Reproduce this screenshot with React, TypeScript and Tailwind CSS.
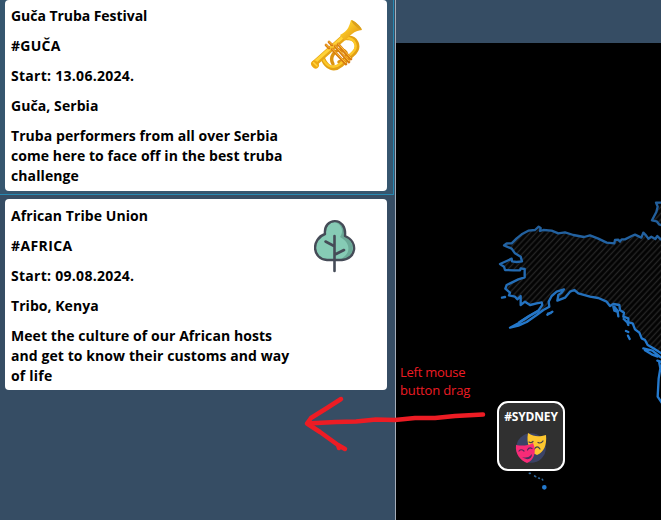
import React from "react";

type Line = { text: string; tracking: string };

function Trumpet() {
  return (
    <svg className="h-[54px] w-[54px]" viewBox="0 0 54 54" fill="none" strokeLinecap="round" strokeLinejoin="round">
      <defs>
        <linearGradient id="gold" x1="0" y1="0" x2="1" y2="1">
          <stop offset="0.2" stopColor="#ffd52e" />
          <stop offset="0.8" stopColor="#e59a12" />
        </linearGradient>
      </defs>
      <path d="M24 46 C20 39 26 31 33 32 C40 34 38 42 30 44" stroke="#dc9310" strokeWidth="3.4" />
      <path d="M14 41 C18 50 25 53 32 47 L44 36 C52 29 47 19 38 20" stroke="#e2a013" strokeWidth="4.6" />
      <path d="M14 41 C18 49 25 51 31 46 L43 35 C50 29 46 20 37 20" stroke="#fdc829" strokeWidth="2.4" />
      <path d="M6 45 L34 20" stroke="#e7a616" strokeWidth="6" />
      <path d="M6 43.8 L34 18.8" stroke="#ffd338" strokeWidth="3" />
      <path d="M31 17 C40 12 40 8 42 2 C46 3 51 8 53 12 C45 13 41 17 36 23 Z" fill="url(#gold)" />
      <ellipse cx="47.5" cy="7" rx="6.8" ry="1.5" transform="rotate(43 47.5 7)" fill="#dba01b" />
      <ellipse cx="6" cy="46.5" rx="3.5" ry="4.3" transform="rotate(-42 6 46.5)" fill="#eea912" />
      <path d="M4.5 44.5 L8 48" stroke="#ffd33d" strokeWidth="1.5" />
      <g stroke="#d77b12" strokeWidth="2.7">
        <path d="M17 27 L20 30 M20 24 L23 27 M23 31 L37 46 M26 28 L40 44 M29 26 L42 41" />
      </g>
      <g stroke="#ffc438" strokeWidth="1">
        <path d="M17 26.5 L20 29.5 M20 23.5 L23 26.5 M23 30.5 L37 45 M26 27.5 L40 43 M29 25.5 L42 40" />
      </g>
    </svg>
  );
}

function Tree() {
  return (
    <svg className="h-[54px] w-[42px]" viewBox="0 0 42 54" fill="none" strokeLinecap="round" strokeLinejoin="round">
      <path d="M13 41 C-2 40 -3 20 11 15 C9 -2 33 -3 31 17 C45 23 42 40 28 41 Z" fill="#86cbb5" />
      <path d="M21 3 C32 3 33 13 30 17 C44 24 39 40 28 41 H24 C37 37 38 24 26 18 C30 12 28 6 21 3Z" fill="#6ba997" />
      <path d="M13 41 C-2 40 -3 20 11 15 C9 -2 33 -3 31 17 C45 23 42 40 28 41 Z" stroke="#454b57" strokeWidth="2.4" />
      <path d="M20.5 17 V52 M11.5 22.5 L20 27 M21 35.5 L30 31" stroke="#454b57" strokeWidth="2.6" />
    </svg>
  );
}

function Masks() {
  return (
    <svg className="h-8 w-8" viewBox="0 0 32 32" fill="none" strokeLinecap="round">
      <circle cx="16" cy="16" r="14.8" fill="#3b4366" />
      <path d="M13 1 C19 5 24 5 31 3 C32 13 29 20 22 23 C15 20 11 12 13 1Z" fill="#fcc62f" />
      <path d="M14 10 Q16 11.5 18 9.5 M23 10.5 Q26 12 28 9 M19 17.5 Q22 12.5 25 17" stroke="#403f50" strokeWidth="1.2" />
      <path d="M1 13 C7 14 12 14 18 11 C22 20 19 28 12 31 C5 28 0 22 1 13Z" fill="#f82b77" />
      <path d="M4 19 Q6 16.5 9 19 M12.5 18 Q14 15 17 16.5" stroke="#512a5d" strokeWidth="1.2" />
      <path d="M7 25 Q13 27 17 22 C17 27 13 29 7 25Z" fill="#4a315e" />
    </svg>
  );
}

function MapDrawing() {
  return (
    <svg className="block h-[477px] w-[265px]" viewBox="396 43 265 477" fill="none">
      <defs>
        <pattern id="hatch" width="13" height="13" patternUnits="userSpaceOnUse" patternTransform="rotate(43)">
          <rect width="13" height="13" fill="#030303" />
          <path d="M6.5 0 V13" stroke="#252525" strokeWidth="4" />
        </pattern>
        <linearGradient id="coast" gradientUnits="userSpaceOnUse" x1="0" y1="110" x2="0" y2="430">
          <stop stopColor="#225f9c" />
          <stop offset="1" stopColor="#247acf" />
        </linearGradient>
      </defs>
      <g transform="translate(490 190) scale(.333333)" stroke="url(#coast)" strokeWidth="7" strokeLinejoin="round" strokeLinecap="round">
        <path fill="url(#hatch)" d="M530 143 L520 143 512 148 502 138 496 147 484 140 475 146 468 136 460 128 454 143 435 134 425 138 405 148 395 148 390 155 385 149 375 150 373 160 350 158 325 146 300 136 282 141 250 135 225 127 205 130 185 122 160 120 150 123 152 114 146 110 135 120 115 122 95 133 80 145 65 160 50 160 42 166 65 176 75 190 92 200 96 214 80 216 66 214 65 206 50 213 30 222 42 230 45 240 70 241 90 241 92 235 104 237 104 262 85 268 50 285 46 296 60 308 57 316 75 320 82 328 92 318 92 345 105 335 120 345 140 340 155 337 157 345 145 362 115 380 85 400 60 413 85 407 110 396 140 375 160 360 178 350 176 335 185 318 200 305 222 298 215 308 205 315 202 332 225 323 240 305 253 300 265 310 300 320 325 324 350 335 360 348 370 342 388 345 390 360 402 368 400 380 415 385 415 397 428 400 435 418 448 428 455 445 465 450 473 465 490 475 530 500" />
        <path fill="url(#hatch)" d="M530 38 L498 38 503 50 499 66 486 91 500 94 507 103 530 112" />
        <path d="M36 323 L45 321 M172 374 L187 365 M174 371 L182 369 M88 397 L118 377 145 362 M370 350 L373 362 383 366 385 379 M373 350 L384 364 M401 387 L412 397 415 405 M408 423 L415 426 M414 437 L419 447 M460 475 L487 482 512 502 M465 481 L485 493 503 500 M502 512 L515 516 M507 514 L511 535 506 565 503 620 515 638" />
        <path d="M118 850 L121 850 M134 858 L137 860 M146 864 L148 865 M157 868 L158 870" stroke="#31699b" strokeWidth="5" />
        <circle cx="163" cy="892" r="3.5" fill="#4f94c4" />
      </g>
    </svg>
  );
}

function EventCard({ lines, icon, selected = false }: { lines: Line[]; icon: React.ReactNode; selected?: boolean }) {
  return (
    <article className={selected
      ? "flex h-[195px] w-[394px] border-r border-b border-[#2688b1] bg-[#36566f] pb-[3px] pl-[5px]"
      : "flex h-[195px] pt-1 pl-[5px]"}>
      <div className="flex h-[191px] w-[382px] rounded-[4px] bg-white">
        <div className={selected ? "w-[300px] pt-[6px] pl-[6px]" : "w-[300px] pt-[7px] pl-[6px]"}>
          {lines.map((line, index) => (
            <p key={line.text} className={`${index < 5 && index > 0 ? "mt-[10px]" : ""} h-5 text-[14px] leading-5 font-bold whitespace-nowrap text-black ${line.tracking}`}>
              {line.text}
            </p>
          ))}
        </div>
        <div className={selected ? "pt-[18px] pl-[4px]" : "pt-[20px] pl-[9px]"}>{icon}</div>
      </div>
    </article>
  );
}

const guca: Line[] = [
  { text: "Guča Truba Festival", tracking: "tracking-[-0.05px]" },
  { text: "#GUČA", tracking: "tracking-[0.25px]" },
  { text: "Start: 13.06.2024.", tracking: "tracking-[0.28px]" },
  { text: "Guča, Serbia", tracking: "tracking-[0.08px]" },
  { text: "Truba performers from all over Serbia", tracking: "tracking-[0.06px]" },
  { text: "come here to face off in the best truba", tracking: "tracking-[0.07px]" },
  { text: "challenge", tracking: "tracking-[0.1px]" },
];

const africa: Line[] = [
  { text: "African Tribe Union", tracking: "tracking-[0.08px]" },
  { text: "#AFRICA", tracking: "tracking-[0.4px]" },
  { text: "Start: 09.08.2024.", tracking: "tracking-[0.28px]" },
  { text: "Tribo, Kenya", tracking: "tracking-[0.05px]" },
  { text: "Meet the culture of our African hosts", tracking: "tracking-[0.07px]" },
  { text: "and get to know their customs and way", tracking: "tracking-[0.08px]" },
  { text: "of life", tracking: "tracking-[0.2px]" },
];

export default function App() {
  return (
    <main className="relative flex h-[520px] w-[661px] overflow-hidden bg-black font-['Open_Sans','Noto_Sans',sans-serif]">
      <aside className="w-[396px] shrink-0 border-r border-[#a5adb8] bg-[#364d64]">
        <EventCard lines={guca} icon={<Trumpet />} selected />
        <EventCard lines={africa} icon={<Tree />} />
      </aside>
      <section className="w-[265px] shrink-0">
        <header className="h-[43px] bg-[#364d64]" />
        <MapDrawing />
      </section>

      <div className="absolute top-[401px] left-[497px] flex h-[70px] w-[68px] flex-col items-center rounded-[11px] border-2 border-white bg-[#303030] pt-[5px]">
        <span className="h-[18px] text-[12px] leading-[18px] font-bold tracking-[-0.18px] whitespace-nowrap text-white">#SYDNEY</span>
        <div className="mt-[6px]"><Masks /></div>
      </div>

      <div className="absolute top-[363px] left-[400px] text-[13px] leading-[18px] text-[#ed1c24]">
        <p className="tracking-[-0.25px] whitespace-nowrap">Left mouse</p>
        <p className="tracking-[-0.15px] whitespace-nowrap">button drag</p>
      </div>
      <svg className="pointer-events-none absolute top-0 left-0 h-[520px] w-[661px]" viewBox="0 0 661 520" fill="none">
        <path d="M483 414.5 L455 416 435 418 415 418 395 420 376 419.5 356 421.5 336 422 307 423.5 M341 399 L327 408 311 418 307 423.5 L320 432 338 445 345 449 M338 445 L339 448" stroke="#ed1c24" strokeWidth="4.5" strokeLinecap="round" strokeLinejoin="round" />
      </svg>
    </main>
  );
}
